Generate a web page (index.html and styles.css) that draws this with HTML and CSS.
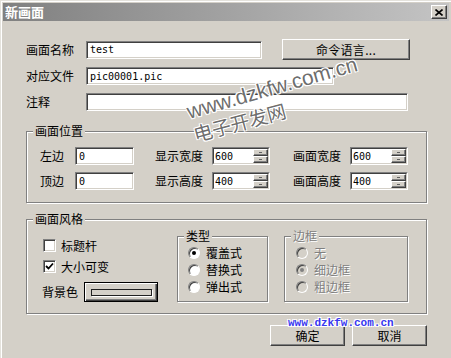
FILE: index.html
```html
<!DOCTYPE html>
<html lang="zh-CN">

<head>
  <meta charset="UTF-8">
  <title>新画面</title>
  <link rel="stylesheet" href="styles.css">
</head>

<body>

  <div class="window">
    <!-- Title bar -->
    <div class="titlebar">
      <span class="title">新画面</span>
      <span class="close-btn">
        <svg width="8" height="7" viewBox="0 0 8 7">
          <path d="M0.5 0.5 L7.5 6.5 M7.5 0.5 L0.5 6.5" stroke="#000" stroke-width="1.6" fill="none"/>
        </svg>
      </span>
    </div>

    <div class="body">
      <!-- Name / file / comment -->
      <div class="row row-first">
        <label class="row-label">画面名称</label>
        <input class="field w-name" type="text" value="test">
        <button class="btn btn-cmd">命令语言...</button>
      </div>
      <div class="row">
        <label class="row-label">对应文件</label>
        <input class="field w-file" type="text" value="pic00001.pic">
      </div>
      <div class="row">
        <label class="row-label">注释</label>
        <input class="field w-note" type="text" value="">
      </div>

      <!-- Position group -->
      <div class="group group-pos">
        <div class="group-title">画面位置</div>
        <div class="pos-row">
          <span class="pos-label short">左边</span>
          <input class="field w-small" type="text" value="0">
          <span class="pos-label long">显示宽度</span>
          <div class="spin">
            <div class="spin-inner">
              <input class="spin-input" type="text" value="600">
              <div class="spin-btns"><span class="spin-btn up"></span><span class="spin-btn down"></span></div>
            </div>
          </div>
          <span class="pos-label long gap-right">画面宽度</span>
          <div class="spin">
            <div class="spin-inner">
              <input class="spin-input" type="text" value="600">
              <div class="spin-btns"><span class="spin-btn up"></span><span class="spin-btn down"></span></div>
            </div>
          </div>
        </div>
        <div class="pos-row second">
          <span class="pos-label short">顶边</span>
          <input class="field w-small" type="text" value="0">
          <span class="pos-label long">显示高度</span>
          <div class="spin">
            <div class="spin-inner">
              <input class="spin-input" type="text" value="400">
              <div class="spin-btns"><span class="spin-btn up"></span><span class="spin-btn down"></span></div>
            </div>
          </div>
          <span class="pos-label long gap-right">画面高度</span>
          <div class="spin">
            <div class="spin-inner">
              <input class="spin-input" type="text" value="400">
              <div class="spin-btns"><span class="spin-btn up"></span><span class="spin-btn down"></span></div>
            </div>
          </div>
        </div>
      </div>

      <!-- Style group -->
      <div class="group group-style">
        <div class="group-title">画面风格</div>
        <div class="style-content">
          <div class="style-left">
            <div class="check-row first">
              <span class="checkbox"></span>
              <span>标题杆</span>
            </div>
            <div class="check-row second">
              <span class="checkbox">
                <svg width="9" height="9" viewBox="0 0 9 9">
                  <path d="M1 4 L3.5 6.5 L8 1.5" stroke="#000" stroke-width="1.8" fill="none"/>
                </svg>
              </span>
              <span>大小可变</span>
            </div>
            <div class="bg-row">
              <span class="bg-label">背景色</span>
              <button class="btn btn-color"><span class="color-swatch"></span></button>
            </div>
          </div>

          <div class="group inner-group group-type">
            <div class="group-title">类型</div>
            <div class="radio-list">
              <div class="radio-row"><span class="radio checked"></span><span>覆盖式</span></div>
              <div class="radio-row"><span class="radio"></span><span>替换式</span></div>
              <div class="radio-row"><span class="radio"></span><span>弹出式</span></div>
            </div>
          </div>

          <div class="group inner-group group-border disabled">
            <div class="group-title">边框</div>
            <div class="radio-list">
              <div class="radio-row"><span class="radio"></span><span>无</span></div>
              <div class="radio-row"><span class="radio checked"></span><span>细边框</span></div>
              <div class="radio-row"><span class="radio"></span><span>粗边框</span></div>
            </div>
          </div>
        </div>
      </div>

      <!-- Dialog buttons -->
      <div class="actions">
        <button class="btn btn-action">确定</button>
        <button class="btn btn-action">取消</button>
      </div>
    </div>

    <!-- Watermarks -->
    <div class="watermark wm-url">www.dzkfw.com.cn</div>
    <div class="watermark wm-name">电子开发网</div>
    <div class="wm-blue">www.dzkfw.com.cn</div>
  </div>

</body>

</html>
```

FILE: styles.css
```css
/* Win98 style dialog */

body {
  margin: 0;
  padding: 0;
  background-color: #d4d0c8;
  font-family: "Noto Sans CJK SC", sans-serif;
  font-size: 12px;
  line-height: 14px;
  color: #000;
}

.window {
  position: relative;
  width: 451px;
  height: 358px;
  box-sizing: border-box;
  padding: 3px 2px 0 3px;
  background-color: #d4d0c8;
  box-shadow: inset 1px 1px 0 #e4e2dc, inset 2px 2px 0 #fff;
  overflow: hidden;
}

.titlebar {
  height: 18px;
  display: flex;
  align-items: center;
  justify-content: space-between;
  padding: 0 2px;
  background: linear-gradient(to right, #808080, #c4c4c4);
}

.title {
  color: #fff;
  font-weight: bold;
  font-size: 13px;
}

.close-btn {
  width: 16px;
  height: 14px;
  box-sizing: border-box;
  display: flex;
  align-items: center;
  justify-content: center;
  background-color: #d4d0c8;
  border: 1px solid;
  border-color: #fff #404040 #404040 #fff;
  box-shadow: inset -1px -1px 0 #808080;
}

.body {
  padding-left: 23px;
}

/* Top rows */
.row {
  display: flex;
  align-items: center;
  height: 18px;
  margin-top: 8px;
}

.row:nth-child(2) {
  margin-top: 7px;
}

.row-first {
  height: 21px;
  margin-top: 18px;
}

.row-label {
  width: 60px;
}

.field {
  box-sizing: border-box;
  height: 18px;
  padding: 0 3px;
  border: 1px solid;
  border-color: #808080 #fff #fff #808080;
  box-shadow: inset 1px 1px 0 #404040, inset -1px -1px 0 #d4d0c8;
  background-color: #fff;
  font-family: "DejaVu Sans Mono", monospace;
  font-size: 10px;
  color: #000;
  outline: none;
}

.w-name {
  width: 176px;
}

.w-file {
  width: 248px;
}

.w-note {
  width: 322px;
}

.w-small {
  width: 59px;
}

.btn {
  box-sizing: border-box;
  padding: 0;
  background-color: #d4d0c8;
  border: 1px solid;
  border-color: #fff #404040 #404040 #fff;
  box-shadow: inset -1px -1px 0 #808080;
  font-family: "Noto Sans CJK SC", sans-serif;
  font-size: 12px;
  color: #000;
}

.btn-cmd {
  width: 128px;
  height: 21px;
  margin-left: 20px;
  letter-spacing: 0.3px;
}

/* Group boxes */
.group {
  box-sizing: border-box;
  width: 401px;
  border: 1px solid #808080;
  box-shadow: 1px 1px 0 #fff, inset 1px 1px 0 #fff;
}

.group-title {
  width: fit-content;
  margin: -7px 0 0 6px;
  padding: 0 2px;
  background-color: #d4d0c8;
  line-height: 12px;
}

.group-pos {
  margin-top: 20px;
  padding-bottom: 12px;
}

.pos-row {
  display: flex;
  align-items: center;
  height: 18px;
  margin-top: 10px;
  padding-left: 13px;
}

.pos-row.second {
  margin-top: 7px;
}

.pos-label.short {
  width: 35px;
}

.pos-label.long {
  width: 57px;
  margin-left: 21px;
}

.pos-label.gap-right {
  margin-left: 23px;
}

.spin {
  box-sizing: border-box;
  width: 58px;
  height: 18px;
  border: 1px solid;
  border-color: #808080 #fff #fff #808080;
}

.spin-inner {
  display: flex;
  height: 100%;
  box-sizing: border-box;
  border: 1px solid;
  border-color: #404040 #d4d0c8 #d4d0c8 #404040;
  background-color: #fff;
}

.spin-input {
  flex: 1;
  min-width: 0;
  padding: 0 1px;
  border: none;
  outline: none;
  background: transparent;
  font-family: "DejaVu Sans Mono", monospace;
  font-size: 10px;
  color: #000;
}

.spin-btns {
  width: 15px;
  display: flex;
  flex-direction: column;
}

.spin-btn {
  flex: 1;
  position: relative;
  box-sizing: border-box;
  background-color: #d4d0c8;
  border: 1px solid;
  border-color: #fff #404040 #404040 #fff;
  box-shadow: inset -1px -1px 0 #808080;
}

.spin-btn::after {
  content: "";
  position: absolute;
  left: 5px;
  top: 2px;
  width: 3px;
  height: 1px;
  background-color: #606060;
}

/* Style group */
.group-style {
  margin-top: 16px;
  padding-bottom: 11px;
}

.style-content {
  display: flex;
  align-items: flex-start;
  margin-top: 11px;
  padding-left: 16px;
}

.style-left {
  width: 134px;
}

.check-row {
  display: flex;
  align-items: center;
  gap: 5px;
  height: 13px;
  margin-top: 3px;
}

.check-row.second {
  margin-top: 8px;
}

.checkbox {
  box-sizing: border-box;
  width: 13px;
  height: 13px;
  display: flex;
  align-items: center;
  justify-content: center;
  background-color: #fff;
  border: 1px solid;
  border-color: #808080 #fff #fff #808080;
  box-shadow: inset 1px 1px 0 #404040, inset -1px -1px 0 #d4d0c8;
}

.bg-row {
  display: flex;
  align-items: center;
  height: 20px;
  margin-top: 9px;
  margin-left: -1px;
}

.bg-label {
  width: 42px;
}

.btn-color {
  width: 74px;
  height: 20px;
  display: flex;
  align-items: center;
  justify-content: center;
  border: 1px solid #000;
  box-shadow: inset 1px 1px 0 #fff, inset -1px -1px 0 #404040, inset -2px -2px 0 #808080;
}

.color-swatch {
  width: 61px;
  height: 7px;
  box-sizing: border-box;
  border: 1px solid #202020;
  background-color: #d4d0c8;
  box-shadow: 1px 1px 0 #fff;
}

.inner-group {
  height: 66px;
  padding-bottom: 7px;
}

.group-type {
  width: 91px;
}

.group-border {
  width: 124px;
  margin-left: 16px;
}

.radio-list {
  display: flex;
  flex-direction: column;
  gap: 3px;
  margin-top: 4px;
  padding-left: 10px;
}

.group-border .radio-list {
  padding-left: 11px;
}

.radio-row {
  display: flex;
  align-items: center;
  gap: 6px;
  height: 14px;
}

.radio {
  position: relative;
  box-sizing: border-box;
  width: 12px;
  height: 12px;
  border-radius: 50%;
  background-color: #fff;
  border: 1px solid;
  border-color: #808080 #fff #fff #808080;
  box-shadow: inset 1px 1px 0 #404040;
}

.radio.checked::after {
  content: "";
  position: absolute;
  left: 3px;
  top: 3px;
  width: 4px;
  height: 4px;
  border-radius: 50%;
  background-color: #000;
}

.disabled {
  color: #808080;
  text-shadow: 1px 1px 0 #fff;
}

.disabled .radio {
  background-color: #d4d0c8;
}

.disabled .radio.checked::after {
  background-color: #808080;
}

/* Dialog buttons */
.actions {
  display: flex;
  justify-content: flex-end;
  gap: 7px;
  width: 401px;
  margin-top: 11px;
}

.btn-action {
  width: 75px;
  height: 21px;
}

/* Watermarks */
.watermark {
  position: absolute;
  font-family: "Liberation Sans", Arial, sans-serif;
  font-size: 21px;
  line-height: 24px;
  color: rgba(70, 70, 70, 0.8);
  text-shadow: 1px 1px 0 #fff, -1px -1px 0 #fff, 1px -1px 0 #fff, -1px 1px 0 #fff;
  white-space: nowrap;
  transform-origin: center;
}

.wm-url {
  left: 184px;
  top: 76px;
  transform: rotate(-16deg);
}

.wm-name {
  left: 192px;
  top: 110px;
  font-family: "Noto Sans CJK SC", sans-serif;
  font-size: 19px;
  transform: rotate(-15deg);
}

.wm-blue {
  position: absolute;
  left: 288px;
  top: 317px;
  font-family: "Liberation Mono", monospace;
  font-size: 11px;
  font-weight: bold;
  line-height: 13px;
  color: #3838f0;
  text-shadow: 1px 1px 0 #fff, -1px -1px 0 #fff, 1px -1px 0 #fff, -1px 1px 0 #fff;
  white-space: nowrap;
}
```
